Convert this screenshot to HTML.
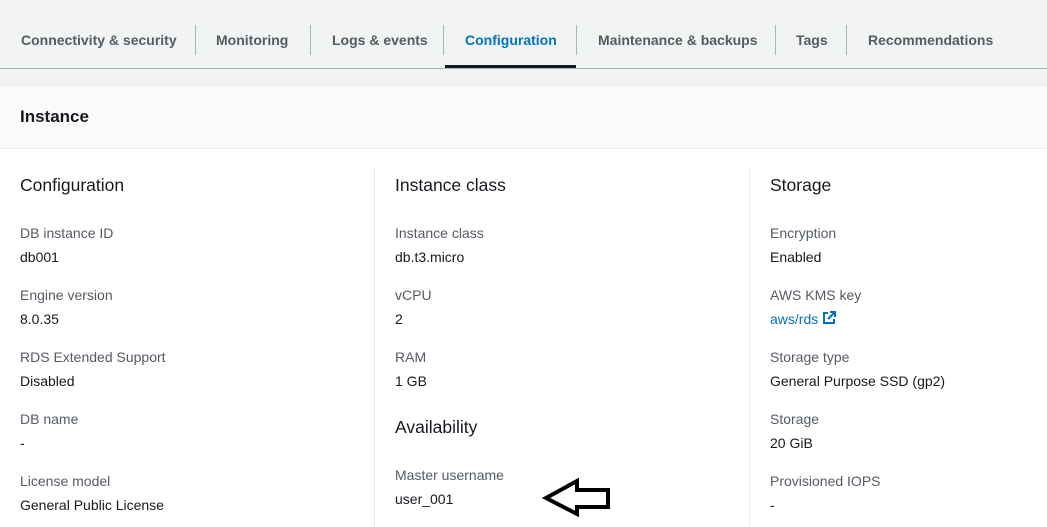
<!DOCTYPE html>
<html><head><style>
body{margin:0;width:1047px;height:527px;overflow:hidden;background:#fff;font-family:"Liberation Sans",Arial,sans-serif;position:relative}
.tabs{position:absolute;left:0;top:0;width:1047px;height:68px;background:#f2f3f3;border-bottom:1px solid #aab7b8}
.tab{position:absolute;top:32px;font-size:14px;font-weight:bold;color:#545b64;white-space:nowrap}
.sep{position:absolute;top:25px;width:1px;height:30px;background:#aab7b8}
.gap{position:absolute;top:69px;left:0;width:1047px;height:16px;background:#f2f3f3}
.hdr{position:absolute;top:85px;left:0;width:1047px;height:64px;background:#fafafa;border-bottom:1px solid #eaeded;border-top:1px solid #eaeded;box-sizing:border-box}
.hdr span{position:absolute;left:20px;top:21px;font-size:17px;font-weight:bold;color:#16191f}
.t{position:absolute;font-size:17.5px;color:#16191f}
.l{position:absolute;font-size:14px;color:#545b64}
.v{position:absolute;font-size:14px;color:#16191f}
.d{position:absolute;top:166px;width:1px;height:361px;background:#eaeded}
</style></head><body>
<div class="tabs">
<div class="tab" style="left:21px">Connectivity &amp; security</div><div class="sep" style="left:195px"></div>
<div class="tab" style="left:216px">Monitoring</div><div class="sep" style="left:310px"></div>
<div class="tab" style="left:332px">Logs &amp; events</div><div class="sep" style="left:443px"></div>
<div class="tab" style="left:465px;color:#0073bb">Configuration</div><div class="sep" style="left:576px"></div>
<div class="tab" style="left:598px">Maintenance &amp; backups</div><div class="sep" style="left:775px"></div>
<div class="tab" style="left:796px">Tags</div><div class="sep" style="left:846px"></div>
<div class="tab" style="left:868px">Recommendations</div>
<div style="position:absolute;left:445px;top:65px;width:131px;height:3px;background:#16191f"></div>
</div>
<div class="gap"></div>
<div class="hdr"><span>Instance</span></div>
<div class="d" style="left:374px"></div><div class="d" style="left:749px"></div>

<div class="t" style="left:20px;top:175px">Configuration</div>
<div class="l" style="left:20px;top:225px">DB instance ID</div><div class="v" style="left:20px;top:249px">db001</div>
<div class="l" style="left:20px;top:287px">Engine version</div><div class="v" style="left:20px;top:311px">8.0.35</div>
<div class="l" style="left:20px;top:349px">RDS Extended Support</div><div class="v" style="left:20px;top:373px">Disabled</div>
<div class="l" style="left:20px;top:411px">DB name</div><div class="v" style="left:20px;top:435px">-</div>
<div class="l" style="left:20px;top:473px">License model</div><div class="v" style="left:20px;top:497px">General Public License</div>

<div class="t" style="left:395px;top:175px">Instance class</div>
<div class="l" style="left:395px;top:225px">Instance class</div><div class="v" style="left:395px;top:249px">db.t3.micro</div>
<div class="l" style="left:395px;top:287px">vCPU</div><div class="v" style="left:395px;top:311px">2</div>
<div class="l" style="left:395px;top:349px">RAM</div><div class="v" style="left:395px;top:373px">1 GB</div>
<div class="t" style="left:395px;top:417px">Availability</div>
<div class="l" style="left:395px;top:467px">Master username</div><div class="v" style="left:395px;top:491px">user_001</div>

<div class="t" style="left:770px;top:175px">Storage</div>
<div class="l" style="left:770px;top:225px">Encryption</div><div class="v" style="left:770px;top:249px">Enabled</div>
<div class="l" style="left:770px;top:287px">AWS KMS key</div><div class="v" style="left:770px;top:311px;color:#0073bb">aws/rds <svg width="14" height="14" viewBox="0 0 14 14" style="vertical-align:-1px"><path d="M6 2H2v10h10V8" fill="none" stroke="#0073bb" stroke-width="2"/><path d="M8 1h5v5M13 1L6 8" fill="none" stroke="#0073bb" stroke-width="2"/></svg></div>
<div class="l" style="left:770px;top:349px">Storage type</div><div class="v" style="left:770px;top:373px">General Purpose SSD (gp2)</div>
<div class="l" style="left:770px;top:411px">Storage</div><div class="v" style="left:770px;top:435px">20 GiB</div>
<div class="l" style="left:770px;top:473px">Provisioned IOPS</div><div class="v" style="left:770px;top:497px">-</div>

<svg style="position:absolute;left:0;top:0" width="1047" height="527"><path d="M546 498L577 481V490H608V507H577V514Z" fill="#fff" stroke="#000" stroke-width="4" stroke-linejoin="miter"/></svg>
</body></html>
